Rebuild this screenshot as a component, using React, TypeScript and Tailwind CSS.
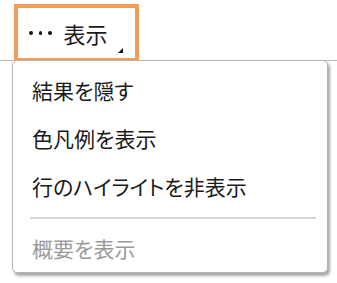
export default function App() {
  const items = ["結果を隠す", "色凡例を表示", "行のハイライトを非表示"];
  return (
    <div
      className="relative h-[283px] w-[337px] overflow-hidden bg-white text-[#1a1a1a]"
      style={{ fontFamily: '"Noto Sans CJK JP", "Noto Sans", sans-serif', fontFeatureSettings: '"palt"' }}
    >
      {/* toolbar */}
      <div className="h-[61px] border-b border-[#b8b8b8] pt-[4px]">
        <div className="relative ml-[14px] flex h-[58px] w-[125px] items-center gap-[12px] border-4 border-[#f19c59] bg-white pl-[11px]">
          <div className="flex gap-[6px]">
            <span className="h-[3.5px] w-[3.5px] rounded-full bg-[#111]" />
            <span className="h-[3.5px] w-[3.5px] rounded-full bg-[#111]" />
            <span className="h-[3.5px] w-[3.5px] rounded-full bg-[#111]" />
          </div>
          <span className="text-[22px] leading-none">表示</span>
          <svg
            className="absolute bottom-[5px] right-[12px]"
            width="5"
            height="5"
            viewBox="0 0 5 5"
          >
            <path d="M5 0 L5 5 L0 5 Z" fill="#111" />
          </svg>
        </div>
      </div>

      {/* dropdown menu */}
      <div className="absolute left-[12px] top-[60px] h-[213px] w-[316px] rounded-[5px] border border-[#b4b4b4] bg-white pt-[6px] shadow-[2px_3px_3px_rgba(0,0,0,0.35)]">
        {items.map((t) => (
          <div key={t} className="flex h-[48px] items-center pl-[19px] text-[21px]">
            {t}
          </div>
        ))}
        <div className="py-[6px] pl-[17px] pr-[11px]">
          <div className="h-[2px] bg-[#d4d4d4]" />
        </div>
        <div className="flex h-[48px] items-center pl-[19px] text-[21px] text-[#9a9a9a]">
          概要を表示
        </div>
      </div>
    </div>
  );
}
